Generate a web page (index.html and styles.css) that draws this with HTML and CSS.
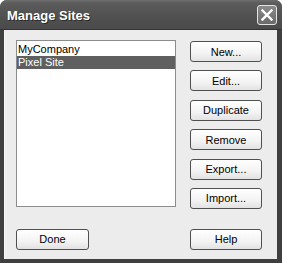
FILE: index.html
```
<!DOCTYPE html>
<html lang="en">
<head>
    <meta charset="UTF-8">
    <title>Manage Sites</title>
    <link rel="stylesheet" href="styles.css">
</head>
<body>
<div class="dialog">
    <div class="dialog__titlebar">
        <span class="dialog__title">Manage Sites</span>
        <button class="dialog__close" aria-label="Close">
            <svg width="12" height="12" viewBox="0 0 12 12">
                <path d="M1.5 1.5 L10.5 10.5 M10.5 1.5 L1.5 10.5" stroke="#fff" stroke-width="2.4" stroke-linecap="square"/>
            </svg>
        </button>
    </div>
    <div class="dialog__client">
        <div class="dialog__main">
            <ul class="site-list">
                <li class="site-list__item">MyCompany</li>
                <li class="site-list__item site-list__item--selected">Pixel Site</li>
            </ul>
            <div class="dialog__actions">
                <button class="btn">New...</button>
                <button class="btn">Edit...</button>
                <button class="btn">Duplicate</button>
                <button class="btn">Remove</button>
                <button class="btn">Export...</button>
                <button class="btn">Import...</button>
            </div>
        </div>
        <div class="dialog__footer">
            <button class="btn btn--done">Done</button>
            <button class="btn">Help</button>
        </div>
    </div>
</div>
</body>
</html>
```

FILE: styles.css
```
body {
    margin: 0;
    background: #fff;
    font-family: "Liberation Sans", Arial, sans-serif;
}

.dialog {
    width: 282px;
    height: 263px;
    display: flex;
    flex-direction: column;
    background: #3f3f3f;
    border-radius: 7px 7px 0 0;
    box-sizing: border-box;
    padding: 0 5px 4px 4px;
}

.dialog__titlebar {
    height: 30px;
    margin: 0 -5px 0 -4px;
    padding: 0 5px 0 7px;
    display: flex;
    align-items: center;
    justify-content: space-between;
    background: linear-gradient(#6e6e6e 0, #5c5c5c 3px, #525252 50%, #4a4a4a 100%);
    border-radius: 7px 7px 0 0;
    border-bottom: 1px solid #333;
    box-sizing: border-box;
}

.dialog__title {
    color: #fff;
    font-weight: bold;
    font-size: 13px;
    text-shadow: 1px 1px 0 #2a2a2a;
    padding-top: 1px;
}

.dialog__close {
    width: 20px;
    height: 20px;
    padding: 0;
    margin-top: 1px;
    display: flex;
    align-items: center;
    justify-content: center;
    border: 1px solid #e4e4e4;
    border-radius: 3px;
    background: linear-gradient(#8a8a8a, #6a6a6a);
}

.dialog__client {
    flex: 1;
    display: flex;
    flex-direction: column;
    gap: 20px;
    padding: 10px 15px 0 11px;
    background: #ececec;
    border-left: 1px solid #f6f6f6;
}

.dialog__main {
    display: flex;
    gap: 14px;
}

.site-list {
    width: 161px;
    height: 167px;
    margin: 0;
    padding: 2px 0 0;
    list-style: none;
    background: #fff;
    border: 1px solid #8c8c8c;
    box-sizing: border-box;
}

.site-list__item {
    height: 13px;
    line-height: 13px;
    padding-left: 1px;
    font-size: 11px;
    color: #000;
}

.site-list__item--selected {
    background: #5f5f5f;
    color: #fff;
}

.dialog__actions {
    display: flex;
    flex-direction: column;
    gap: 8.4px;
    padding-top: 1px;
}

.btn {
    width: 72px;
    height: 21px;
    padding: 0;
    font-family: "Liberation Sans", Arial, sans-serif;
    font-size: 11px;
    color: #000;
    background: linear-gradient(#ffffff, #f3f3f3 60%, #e2e2e2);
    border: 1px solid #505050;
    border-radius: 3px;
}

.dialog__footer {
    display: flex;
    justify-content: space-between;
}

.btn--done {
    width: 73px;
    margin-left: 0;
}
```
